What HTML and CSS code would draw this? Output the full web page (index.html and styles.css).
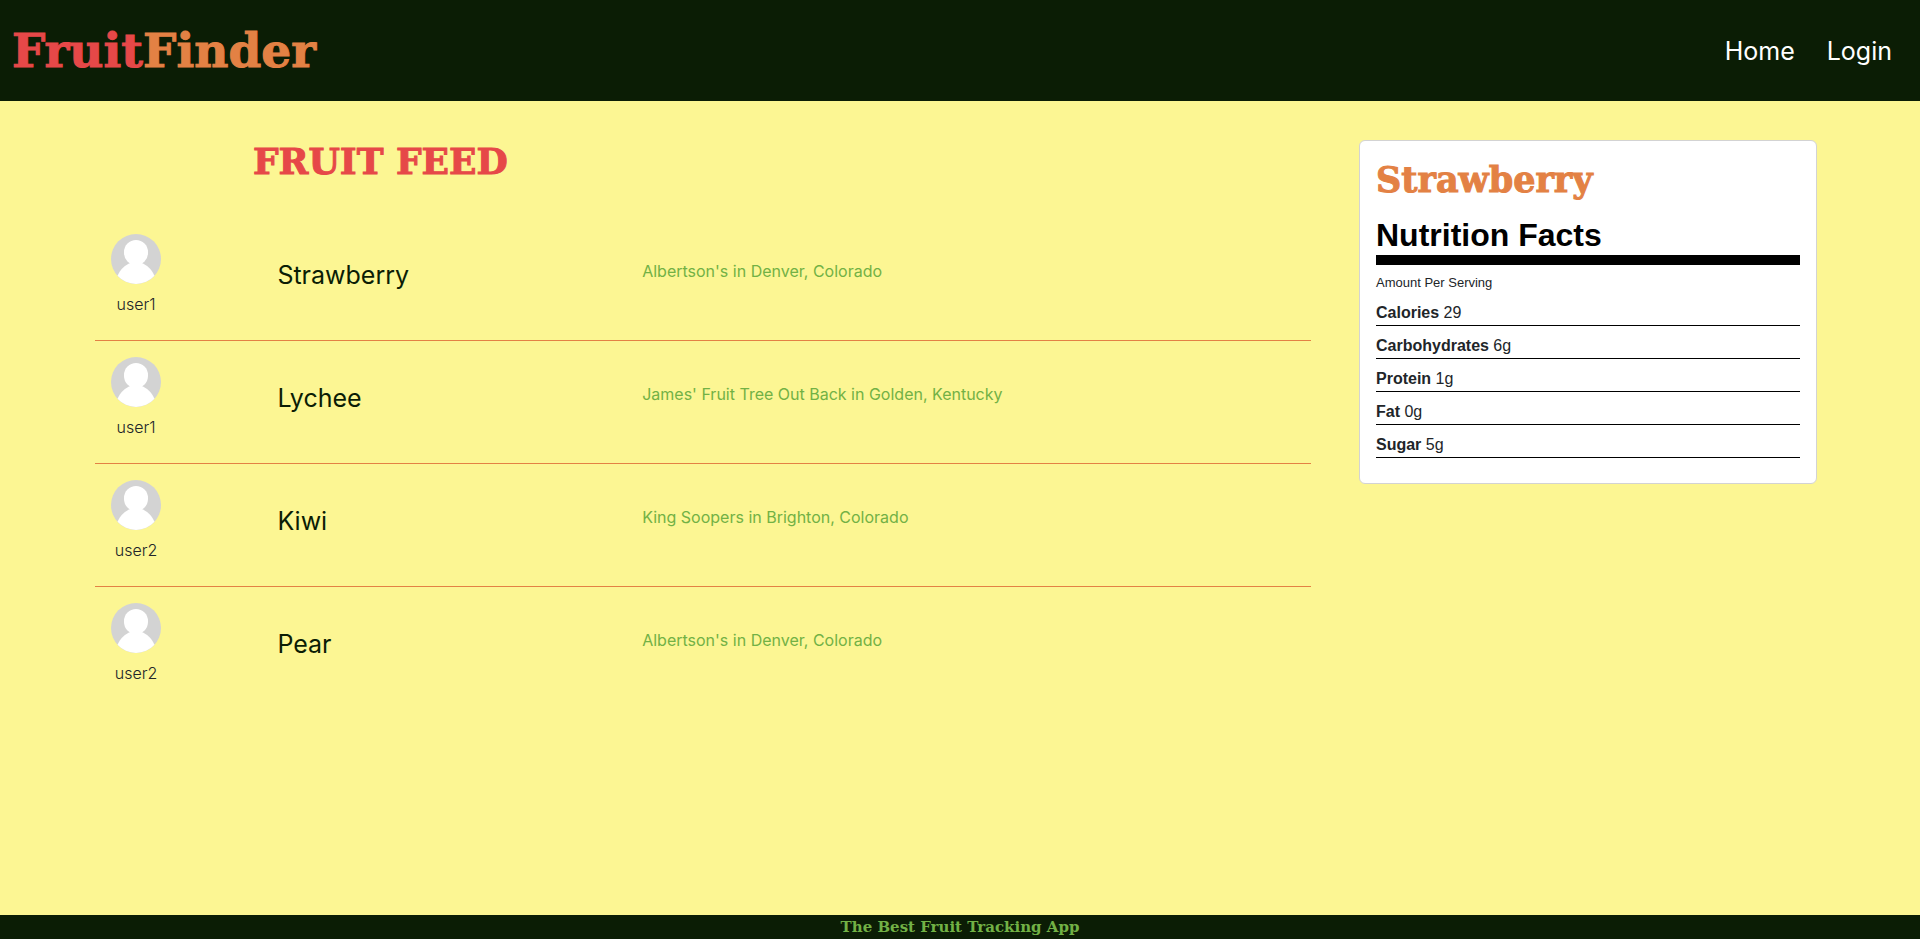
FILE: index.html
```html
<!DOCTYPE html>
<html lang="en">
<head>
<meta charset="utf-8">
<meta name="viewport" content="width=device-width, initial-scale=1">
<title>FruitFinder</title>
<link rel="stylesheet" href="styles.css">
</head>
<body>
<svg class="sprite" aria-hidden="true">
  <symbol id="avatar" viewBox="0 0 50 50">
    <circle cx="25" cy="25" r="25" fill="#d3d3d3"/>
    <rect x="13" y="6" width="24" height="25" rx="12" fill="#fff"/>
    <path d="M18 29.500Q25 26 32 29.500Q40 33.500 43.500 41.800A25 25 0 0 1 6.500 41.800Q10 33.500 18 29.500Z" fill="#fff"/>
  </symbol>
</svg>
<header class="navbar">
  <a class="brand" href="#"><span class="brand-fruit">Fruit</span><span class="brand-finder">Finder</span></a>
  <nav class="nav-links">
    <a href="#">Home</a>
    <a href="#">Login</a>
  </nav>
</header>
<main class="content">
  <section class="feed">
    <h1 class="feed-title">FRUIT FEED</h1>
    <ul class="feed-list">
      <li class="feed-row">
        <div class="user"><svg class="avatar"><use href="#avatar"/></svg><span>user1</span></div>
        <h2 class="fruit">Strawberry</h2>
        <p class="place">Albertson's in Denver, Colorado</p>
      </li>
      <li class="feed-row">
        <div class="user"><svg class="avatar"><use href="#avatar"/></svg><span>user1</span></div>
        <h2 class="fruit">Lychee</h2>
        <p class="place">James' Fruit Tree Out Back in Golden, Kentucky</p>
      </li>
      <li class="feed-row">
        <div class="user"><svg class="avatar"><use href="#avatar"/></svg><span>user2</span></div>
        <h2 class="fruit">Kiwi</h2>
        <p class="place">King Soopers in Brighton, Colorado</p>
      </li>
      <li class="feed-row">
        <div class="user"><svg class="avatar"><use href="#avatar"/></svg><span>user2</span></div>
        <h2 class="fruit">Pear</h2>
        <p class="place">Albertson's in Denver, Colorado</p>
      </li>
    </ul>
  </section>
  <aside class="card">
    <h2 class="card-title">Strawberry</h2>
    <h3 class="facts-title">Nutrition Facts</h3>
    <p class="serving">Amount Per Serving</p>
    <ul class="facts">
      <li><b>Calories</b> 29</li>
      <li><b>Carbohydrates</b> 6g</li>
      <li><b>Protein</b> 1g</li>
      <li><b>Fat</b> 0g</li>
      <li><b>Sugar</b> 5g</li>
    </ul>
  </aside>
</main>
<footer class="footer">The Best Fruit Tracking App</footer>
</body>
</html>
```
FILE: styles.css
```css
* {
  box-sizing: border-box;
}

body {
  display: flex;
  flex-direction: column;
  min-height: 100vh;
  margin: 0;
  background: #fcf693;
  color: #212529;
  font: 300 16px/24px Inter, sans-serif;
}

h1, h2, h3, p, ul {
  margin: 0;
  padding: 0;
}

ul {
  list-style: none;
}

a {
  text-decoration: none;
}

b {
  font-weight: 700;
}

.sprite {
  position: absolute;
  width: 0;
  height: 0;
}

.navbar {
  display: flex;
  align-items: center;
  justify-content: space-between;
  padding: 17px 28px 16px 12px;
  background: #0b1d05;
}

.brand,
.feed-title,
.card-title,
.footer {
  font-family: "DejaVu Serif", serif;
  font-weight: 700;
}

.brand,
.feed-title,
.card-title {
  -webkit-text-stroke: 1px;
}

.brand {
  font-size: 47px;
  line-height: 68px;
}

.brand-fruit {
  color: #e64848;
}

.brand-finder {
  color: #e38144;
}

.nav-links {
  display: flex;
  gap: 32px;
}

.nav-links a {
  color: #fff;
  font-size: 25px;
  font-weight: 400;
  line-height: 36px;
}

.content {
  display: grid;
  flex: 1;
  grid-template-columns: 1216fr 458fr;
  align-items: start;
  gap: 48px;
  padding: 39px 103px 48px 95px;
}

.feed-title {
  padding-left: 158px;
  color: #e64848;
  font-size: 36px;
  line-height: 42px;
}

.feed-list {
  margin-top: 36px;
}

.feed-row {
  display: grid;
  grid-template-columns: 15% 30% 1fr;
  height: 123px;
  padding-top: 16px;
  border-bottom: 1px solid #e38144;
}

.feed-row:last-child {
  border-bottom: 0;
}

.user {
  display: flex;
  flex-direction: column;
  align-items: center;
  justify-self: start;
  gap: 8px;
  width: 82px;
}

.avatar {
  width: 50px;
  height: 50px;
}

.fruit {
  padding-top: 26px;
  color: #0b1d05;
  font-size: 25px;
  font-weight: 400;
  line-height: 30px;
}

.place {
  padding-top: 25px;
  color: #72b145;
  font-weight: 400;
}

.card {
  padding: 16px 16px 25px;
  border: 1px solid #d3d3d3;
  border-radius: 6px;
  background: #fff;
  font-family: "Liberation Sans", Arial, sans-serif;
}

.card-title {
  color: #e38144;
  font-size: 35px;
  line-height: 46px;
}

.facts-title {
  margin-top: 14px;
  padding-bottom: 2px;
  border-bottom: 10px solid #000;
  color: #000;
  font-size: 32px;
  line-height: 36px;
}

.serving {
  margin-top: 8px;
  font-size: 13px;
  line-height: 20px;
}

.facts li {
  padding-top: 8px;
  border-bottom: 1px solid #000;
}

.footer {
  background: #0b1d05;
  color: #72b145;
  font-size: 15px;
  line-height: 24px;
  text-align: center;
}
```
